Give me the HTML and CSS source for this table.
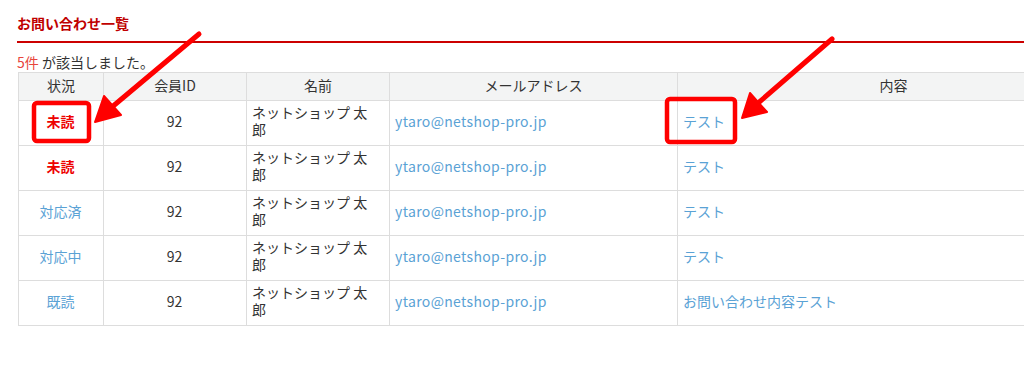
FILE: index.html
```html
<!DOCTYPE html>
<html lang="ja">
<head>
<meta charset="utf-8">
<link rel="stylesheet" href="styles.css">
</head>
<body>
<div class="page">
  <h2 class="title">お問い合わせ一覧</h2>
  <p class="count"><span class="num">5件</span> が該当しました。</p>
  <table class="list">
    <colgroup>
      <col class="c-status"><col class="c-id"><col class="c-name"><col class="c-mail"><col class="c-body">
    </colgroup>
    <thead>
      <tr><th>状況</th><th>会員ID</th><th>名前</th><th>メールアドレス</th><th>内容</th></tr>
    </thead>
    <tbody>
      <tr><td class="st unread">未読</td><td class="id">92</td><td class="name">ネットショップ 太郎</td><td class="link mail">ytaro@netshop-pro.jp</td><td class="link">テスト</td></tr>
      <tr><td class="st unread">未読</td><td class="id">92</td><td class="name">ネットショップ 太郎</td><td class="link mail">ytaro@netshop-pro.jp</td><td class="link">テスト</td></tr>
      <tr><td class="st link">対応済</td><td class="id">92</td><td class="name">ネットショップ 太郎</td><td class="link mail">ytaro@netshop-pro.jp</td><td class="link">テスト</td></tr>
      <tr><td class="st link">対応中</td><td class="id">92</td><td class="name">ネットショップ 太郎</td><td class="link mail">ytaro@netshop-pro.jp</td><td class="link">テスト</td></tr>
      <tr><td class="st link">既読</td><td class="id">92</td><td class="name">ネットショップ 太郎</td><td class="link mail">ytaro@netshop-pro.jp</td><td class="link">お問い合わせ内容テスト</td></tr>
    </tbody>
  </table>
</div>
<svg class="annot" width="1024" height="373" viewBox="0 0 1024 373" xmlns="http://www.w3.org/2000/svg">
  <rect x="34" y="103" width="55" height="38" rx="3" fill="none" stroke="#ff0000" stroke-width="4.5"/>
  <rect x="667" y="99" width="68" height="43" rx="3" fill="none" stroke="#ff0000" stroke-width="4.5"/>
  <line x1="199" y1="34" x2="112" y2="107" stroke="#ff0000" stroke-width="5" stroke-linecap="round"/>
  <polygon points="95,122 104,96 121,115" fill="#ff0000" stroke="#ff0000" stroke-width="2" stroke-linejoin="round"/>
  <line x1="832" y1="39" x2="757" y2="104" stroke="#ff0000" stroke-width="5" stroke-linecap="round"/>
  <polygon points="742,118 750,93 767,112" fill="#ff0000" stroke="#ff0000" stroke-width="2" stroke-linejoin="round"/>
</svg>
</body>
</html>
```
FILE: styles.css
```css
html, body {
  margin: 0;
  padding: 0;
  background: #ffffff;
  overflow: hidden;
}
body {
  width: 1024px;
  height: 373px;
  position: relative;
  font-family: "Noto Sans CJK JP", "Noto Sans", sans-serif;
  font-size: 14px;
  color: #333333;
}
.page {
  padding: 13px 0 0 17px;
}
.title {
  margin: 0;
  font-size: 14px;
  font-weight: bold;
  line-height: 20px;
  color: #c00000;
  padding-bottom: 8px;
  border-bottom: 2px solid #cc0000;
}
.count {
  margin: 10px 0 0 0;
  line-height: 19px;
  font-size: 14px;
}
.count .num {
  color: #e8453c;
}
.list {
  border-collapse: collapse;
  width: 1091px;
  margin-left: 1px;
  table-layout: fixed;
}
.c-status { width: 85px; }
.c-id { width: 143px; }
.c-name { width: 143px; }
.c-mail { width: 288px; }
.c-body { width: 432px; }
.list th,
.list td {
  border: 1px solid #dddddd;
}
.list th {
  background: #f3f4f4;
  font-weight: normal;
  text-align: center;
  line-height: 19px;
  padding: 3px 5px 5px;
}
.list td {
  line-height: 17px;
  padding: 3px 6px 7px 5px;
  vertical-align: middle;
  text-align: left;
}
.list td.name {
  padding-right: 14px;
}
.list td.mail {
  letter-spacing: 0.35px;
}
.list td.st,
.list td.id {
  text-align: center;
}
.list td.link {
  color: #5aa2d5;
}
.list td.unread {
  color: #ee0000;
  font-weight: bold;
}
.annot {
  position: absolute;
  left: 0;
  top: 0;
  pointer-events: none;
}
```
